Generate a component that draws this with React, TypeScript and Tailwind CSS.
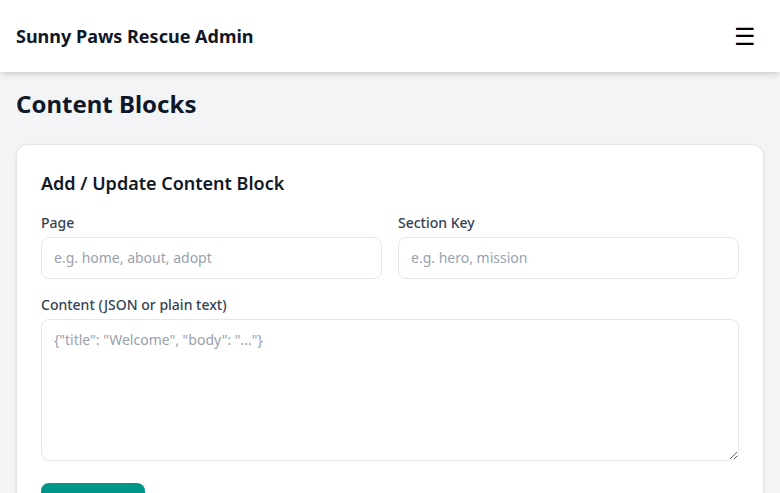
export default function App() {
  return (
    <div className="min-h-screen bg-gray-100 font-['Noto_Sans',sans-serif]">
      {/* Header */}
      <header className="h-[72px] bg-white shadow-md flex items-center justify-between px-4">
        <h1 className="text-lg font-bold text-gray-900">Sunny Paws Rescue Admin</h1>
        <button className="p-2 text-2xl leading-none text-black">☰</button>
      </header>

      <main className="p-4">
        <h2 className="text-2xl font-bold text-gray-900 mb-6">Content Blocks</h2>

        <div className="bg-white rounded-xl border border-gray-200 shadow-sm p-6">
          <h3 className="text-lg font-semibold text-gray-900 mb-4">Add / Update Content Block</h3>

          <div className="space-y-4">
            <div className="grid grid-cols-2 gap-4">
              <div>
                <label className="block text-sm font-medium text-gray-700 mb-1">Page</label>
                <input
                  className="w-full rounded-lg border border-gray-200 px-3 py-2.5 text-sm placeholder-gray-400 outline-none"
                  placeholder="e.g. home, about, adopt"
                />
              </div>
              <div>
                <label className="block text-sm font-medium text-gray-700 mb-1">Section Key</label>
                <input
                  className="w-full rounded-lg border border-gray-200 px-3 py-2.5 text-sm placeholder-gray-400 outline-none"
                  placeholder="e.g. hero, mission"
                />
              </div>
            </div>

            <div>
              <label className="block text-sm font-medium text-gray-700 mb-1">Content (JSON or plain text)</label>
              <textarea
                rows={6}
                className="block w-full rounded-lg border border-gray-200 px-3 py-2.5 text-sm placeholder-gray-400 outline-none"
                placeholder={'{"title": "Welcome", "body": "..."}'}
              />
            </div>
          </div>

          <button className="mt-[22px] rounded-lg bg-teal-600 px-4 py-2.5 text-sm font-semibold text-white">
            Save Block
          </button>
        </div>
      </main>
    </div>
  )
}
